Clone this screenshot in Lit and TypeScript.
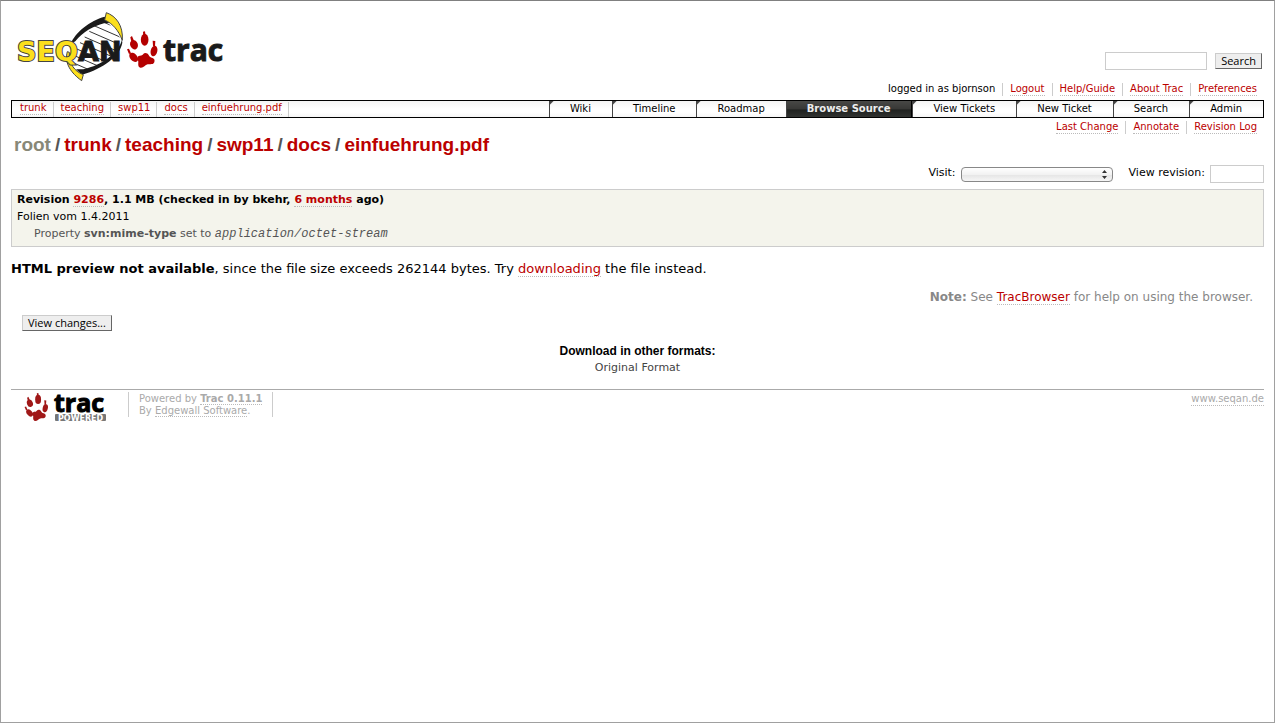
import { LitElement, html, css, svg } from "lit";
import { customElement } from "lit/decorators.js";

const paw = (color: string, place: string) => svg`<g fill=${color} transform=${place}>
  <ellipse cx="402" cy="134" rx="11.500" ry="14.500" transform="rotate(-22 402 134)"/>
  <path d="M391 112l5-4 6 14-8 3z"/>
  <ellipse cx="434" cy="119" rx="11.500" ry="18"/>
  <path d="M429 95l6-1 2 14-7 1z"/>
  <ellipse cx="462" cy="153" rx="10" ry="16" transform="rotate(14 462 153)"/>
  <path d="M458 122l8 1-1 15-6 0z"/>
  <ellipse cx="401" cy="172" rx="10.500" ry="16" transform="rotate(-42 401 172)"/>
  <path d="M381 148l6-2 6 14-6 2z"/>
  <path d="M436 159c10 0 10 10 16 13 9 3 14 6 11 15-3 8-12 5-20 6-8 2-13 12-22 10-8-3-6-12-6-18 0-5-5-9-2-14 3-5 10-3 14-6 3-2 4-6 9-6z"/>
</g>`;

const crumbs = ["trunk", "teaching", "swp11", "docs", "einfuehrung.pdf"];
const tabs = ["Wiki", "Timeline", "Roadmap", "Browse Source", "View Tickets", "New Ticket", "Search", "Admin"];
const rungs = [0, 1, 2, 3, 4, 5, 6, 7, 8, 9];

@customElement("app-root")
export class AppRoot extends LitElement {
  static styles = css`
    :host {
      display: block; box-sizing: border-box; min-height: 100vh;
      border: 1px solid #a0a0a0; border-top-color: #808080;
      padding: 11px 10px; background: #fff; color: #000;
      font: 13px/16px "DejaVu Sans", Verdana, sans-serif;
    }
    * { box-sizing: border-box; }
    a { color: #b00; text-decoration: none; border-bottom: 1px dotted #bbb; }
    svg { display: block; }
    input { border: 1px solid #ccc; background: #fff; height: 18px; padding: 0 3px; margin: 0; font: 10px "DejaVu Sans", sans-serif; }
    button {
      font: 11px/14px "Open Sans", sans-serif; color: #000; background: #eee; padding: 0 5px;
      border: 1px solid #ccc; border-right-color: #666; border-bottom-color: #666; margin: 0;
    }
    ul { list-style: none; margin: 0; padding: 0; display: flex; }
    .header { display: flex; justify-content: space-between; align-items: flex-start; padding-bottom: 1px; }
    .logo { margin-left: 6px; border: 0; }
    .search { display: flex; align-items: center; gap: 8px; margin: 40px 2px 0 0; }
    .search input { width: 102px; }
    .links { font-size: 10px; line-height: 12px; }
    .links li { padding: 0 7px; border-right: 1px solid #ccc; }
    .links a { display: block; }
    .right { justify-content: flex-end; }
    .right li:last-child { border-right: 0; }
    .main {
      display: flex; justify-content: space-between; height: 18px; margin: 4px 0 3px;
      border: 1px solid #000; background: linear-gradient(#f4f4f4, #fff 50%, #fff 70%, #f6f6f6);
    }
    .main .links { padding: 1px 0 0 1px; }
    .main .links li { padding-right: 6px; }
    .tabs { font-size: 10px; line-height: 16px; }
    .tabs a { display: block; color: #000; border: 0; border-left: 1px solid #444; padding: 0 21px 0 20px;
      background: linear-gradient(135deg, #444 2px, transparent 3px); }
    .tabs .active { color: #eee; font-weight: bold; background: linear-gradient(#484846, #383836 50%, #202220 55%, #303230); border-right: 1px solid #000; }
    h1 { font: bold 19px/21px "Liberation Sans", Arial, sans-serif; margin: 0 3px; }
    h1 a { border: 0; }
    h1 .root { color: #887; }
    h1 span { color: #555; padding: 0 4px; }
    .jump { display: flex; justify-content: flex-end; align-items: center; font-size: 11px; margin: 10px 0 6px; }
    .jump label { padding: 0 5px 2px 0; }
    .jump input { width: 54px; }
    select {
      appearance: none; width: 152px; height: 15px; margin: 0 16px 0 0; border: 1px solid #888; border-radius: 4px;
      background: linear-gradient(#fff, #f2f2f2 50%, #e6e6e6 55%, #f6f6f6);
    }
    .select { display: grid; }
    .select > * { grid-area: 1 / 1; }
    .select svg { justify-self: end; align-self: center; margin-right: 22px; pointer-events: none; }
    .info { border: 1px solid #ccc; background: #f4f4ec; padding: 1px 5px 4px; font-size: 11px; line-height: 17px; }
    .info p { margin: 0; }
    .info .prop { color: #555; padding-left: 17px; }
    code { font: italic 12px "Liberation Mono", monospace; }
    .preview { margin: 14px 0 12px; }
    .note { margin: 0; padding-right: 11px; text-align: right; color: #888; font-size: 12px; }
    .changes { margin: 10px 11px 12px; }
    .formats { text-align: center; font-size: 11px; color: #444; }
    h3 { font: bold 12px/17px "Liberation Sans", Arial, sans-serif; margin: 0; color: #000; }
    .formats a { color: #444; border: 0; }
    .footer { display: flex; border-top: 1px solid #aaa; margin-top: 13px; padding-top: 2px; font-size: 10px; line-height: 12px; color: #aaa; }
    .footer a { color: #aaa; }
    .footer p { margin: 0; padding: 1px 10px 0; height: 25px; border: 1px solid #ccc; border-width: 0 1px; }
    .footer .powered { border: 0; margin: 0 22px 0 13px; }
    .footer .site { margin: 1px 0 0 auto; align-self: flex-start; }
    .big { font: bold 30px "Open Sans", sans-serif; fill: #1a1a1a; stroke: #1a1a1a; stroke-width: 1px; }
    .small { font: bold 25px "Open Sans", sans-serif; stroke: #000; stroke-width: 1px; }
    .badge { font: bold 8px "DejaVu Sans", sans-serif; fill: #fff; }
    .seq { font: bold 27px "DejaVu Sans", sans-serif; stroke: #444; stroke-width: 2px; paint-order: stroke; fill: #fbdf1c; }
    .an { font: bold 27px "DejaVu Sans", sans-serif; fill: #1a1a1a; stroke: #1a1a1a; stroke-width: 1px; }
  `;

  render() {
    return html`
      <header class="header">
        <a class="logo" href="#" aria-label="SeqAn Trac">
          <svg width="216" height="70" viewBox="17 12 216 70">
            <g transform="scale(.3333)">
              <path fill="#fff" d="M318 55C260 70 205 130 202 180L240 222C300 205 360 160 366 110z"/>
              <clipPath id="helix"><path d="M318 60C260 75 207 130 204 180L240 218C300 203 355 160 362 115z"/></clipPath>
              <g clip-path="url(#helix)" stroke="#333" stroke-width="3">
                ${rungs.map((i) => svg`<path d="M${296 - i * 14} ${60 + i * 17}l110 48"/>`)}
              </g>
              <path fill="#1a1a1a" d="M314 50C270 62 226 96 212 132L226 124C248 96 280 78 312 70L330 68zM366 118C358 158 306 196 250 208L228 208 246 224C310 206 360 168 367 128z"/>
              <path fill="#fbdf1c" stroke="#444" stroke-width="3" d="M319 38C348 48 370 76 367 121C356 92 338 70 314 60zM202 155C192 190 214 220 245 242L250 224C222 214 207 190 208 157z"/>
            </g>
            <text class="seq" x="17" y="61">SEQ</text>
            <text class="an" x="78" y="61">AN</text>
            ${paw("#b40000", "scale(.3333)")}
            <text class="big" x="163" y="61">trac</text>
          </svg>
        </a>
        <form class="search"><input type="text" aria-label="Search" /><button type="button">Search</button></form>
      </header>
      <ul class="links right">
        <li>logged in as bjornson</li>
        ${["Logout", "Help/Guide", "About Trac", "Preferences"].map((t) => html`<li><a href="#">${t}</a></li>`)}
      </ul>
      <nav class="main">
        <ul class="links">${crumbs.map((t) => html`<li><a href="#">${t}</a></li>`)}</ul>
        <ul class="tabs">${tabs.map((t) => html`<li><a href="#" class=${t === "Browse Source" ? "active" : ""}>${t}</a></li>`)}</ul>
      </nav>
      <ul class="links right">
        ${["Last Change", "Annotate", "Revision Log"].map((t) => html`<li><a href="#">${t}</a></li>`)}
      </ul>
      <h1><a class="root" href="#">root</a>${crumbs.map((t) => html`<span>/</span><a href="#">${t}</a>`)}</h1>
      <form class="jump">
        <label for="visit">Visit:</label>
        <div class="select">
          <select id="visit"><option></option></select>
          <svg width="5" height="9" viewBox="0 0 5 9"><path fill="#333" d="M2.500 0L5 3H0zM2.500 9L0 6h5z"/></svg>
        </div>
        <label for="rev">View revision:</label><input id="rev" type="text" />
      </form>
      <section class="info">
        <p><b>Revision <a href="#">9286</a>, 1.1 MB (checked in by bkehr, <a href="#">6 months</a> ago)</b></p>
        <p>Folien vom 1.4.2011</p>
        <p class="prop">Property <b>svn:mime-type</b> set to <code>application/octet-stream</code></p>
      </section>
      <p class="preview"><b>HTML preview not available</b>, since the file size exceeds 262144 bytes. Try <a href="#">downloading</a> the file instead.</p>
      <p class="note"><b>Note:</b> See <a href="#">TracBrowser</a> for help on using the browser.</p>
      <div class="changes"><button type="button">View changes...</button></div>
      <div class="formats"><h3>Download in other formats:</h3><a href="#">Original Format</a></div>
      <footer class="footer">
        <a class="powered" href="#" aria-label="Trac Powered">
          <svg width="82" height="30" viewBox="0 0 82 30">
            ${paw("#a01818", "translate(-97 -23) scale(.256)")}
            <text class="small" x="30" y="20">trac</text>
            <rect x="31" y="22" width="51" height="7" rx="1" fill="#777"/>
            <text class="badge" x="34" y="29">POWERED</text>
          </svg>
        </a>
        <p>Powered by <a href="#"><b>Trac 0.11.1</b></a><br />By <a href="#">Edgewall Software</a>.</p>
        <a class="site" href="#">www.seqan.de</a>
      </footer>`;
  }
}
